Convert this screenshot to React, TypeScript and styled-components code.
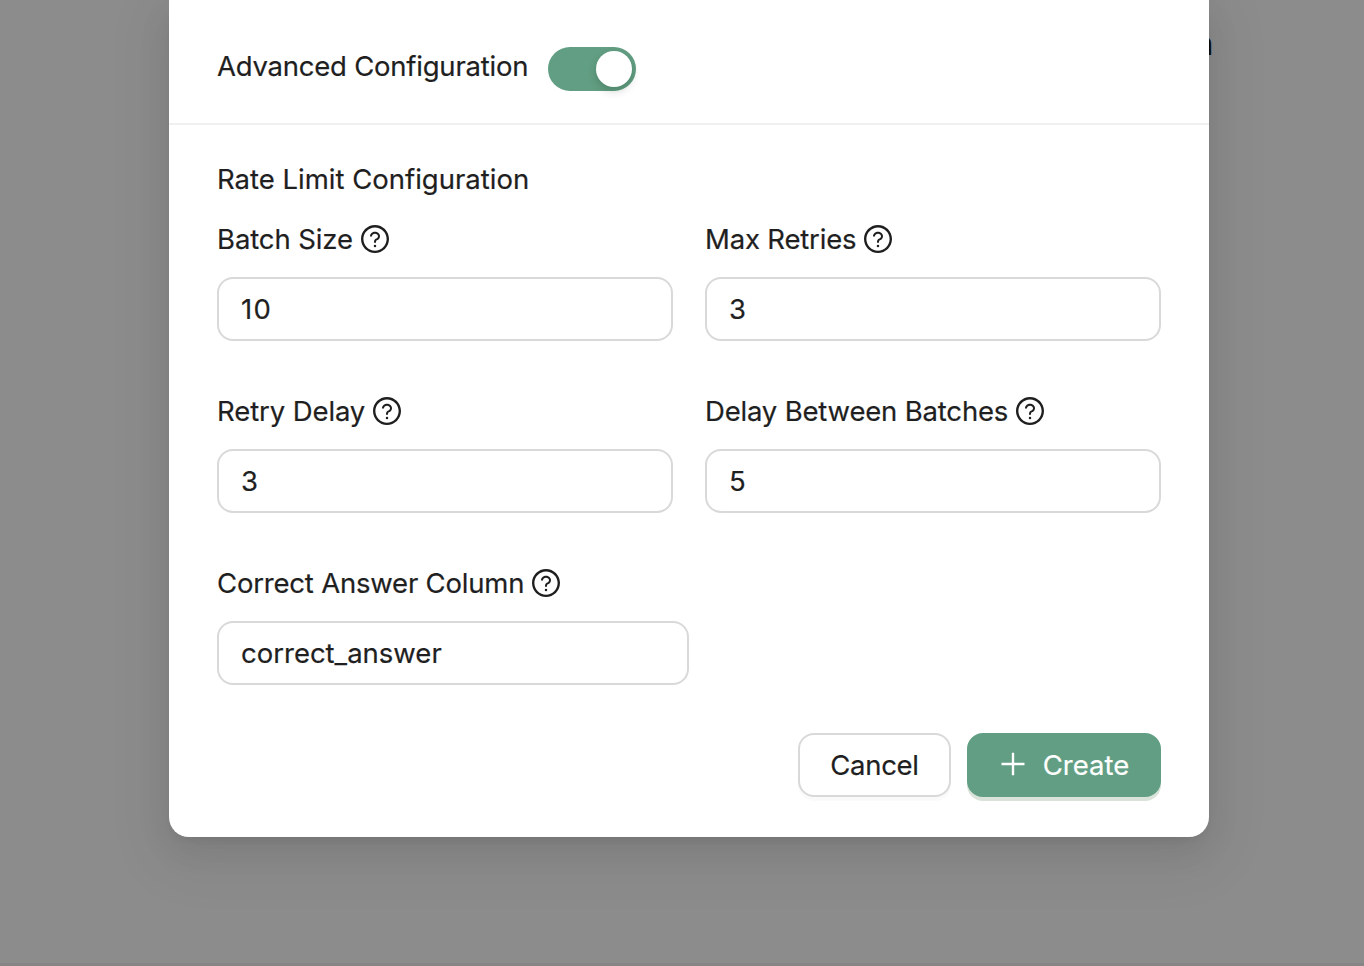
import React from "react";
import styled, { createGlobalStyle } from "styled-components";

const GlobalStyle = createGlobalStyle`
  * { box-sizing: border-box; }
  body {
    margin: 0;
    background: #8c8c8c;
    overflow: hidden;
  }
`;

const Page = styled.div`
  position: relative;
  width: 1364px;
  height: 966px;
  padding-left: 169px;
  overflow: hidden;
  background: #8c8c8c;
  border-bottom: 3px solid #868485;
  color: #1f1f1f;
  font-family: Inter, "Liberation Sans", sans-serif;
  font-size: 27.5px;
  line-height: 44px;
  -webkit-text-stroke: 0.2px currentColor;
`;

const PageHeading = styled.div`
  position: absolute;
  top: 22px;
  right: 151px;
  color: #0c0c0c;
  font-size: 32px;
  font-weight: 600;
`;

const Modal = styled.main`
  position: relative;
  width: 1040px;
  height: 837px;
  background: #fff;
  border-radius: 0 0 20px 20px;
  box-shadow:
    0 12px 32px 0 rgba(0, 0, 0, 0.08),
    0 6px 12px -8px rgba(0, 0, 0, 0.12),
    0 18px 56px 16px rgba(0, 0, 0, 0.05);
`;

const ModalHeader = styled.header`
  display: flex;
  align-items: center;
  gap: 20px;
  height: 125px;
  padding: 12px 48px 0;
  border-bottom: 2px solid #f0f0f0;
`;

const Text = styled.span<{ $tracking?: number }>`
  display: block;
  white-space: nowrap;
  letter-spacing: ${(p) => p.$tracking ?? 0}px;
`;

const HeaderTitle = styled(Text)`
  width: 311px;
  padding-bottom: 3px;
`;

const Switch = styled.button`
  display: flex;
  justify-content: flex-end;
  width: 88px;
  height: 44px;
  margin-top: 2px;
  padding: 4px;
  border: 0;
  border-radius: 22px;
  background: #629e83;
`;

const SwitchHandle = styled.span`
  width: 36px;
  height: 36px;
  border-radius: 50%;
  background: #fff;
  box-shadow: 0 4px 8px rgba(0, 35, 11, 0.2);
`;

const Form = styled.form`
  padding: 32px 48px 0;
`;

const FieldGrid = styled.div`
  display: grid;
  grid-template-columns: 456px 456px;
  column-gap: 32px;
`;

const Field = styled.div<{ $width?: number }>`
  width: ${(p) => p.$width ?? 456}px;
  height: 172px;
  padding-top: 16px;
`;

const Label = styled.label`
  display: flex;
  align-items: center;
  gap: 8px;
  height: 44px;
  margin-bottom: 16px;
`;

const Input = styled.input<{ $tracking?: number }>`
  display: block;
  width: 100%;
  height: 64px;
  padding: 0 22px;
  border: 2px solid #d9d9d9;
  border-radius: 16px;
  outline: 0;
  background: #fff;
  color: inherit;
  font: inherit;
  letter-spacing: ${(p) => p.$tracking ?? 0}px;
`;

const Footer = styled.footer`
  display: flex;
  justify-content: flex-end;
  gap: 16px;
  margin-top: 16px;
`;

const Button = styled.button<{ $primary?: boolean }>`
  display: flex;
  align-items: center;
  justify-content: center;
  gap: 16px;
  width: ${(p) => (p.$primary ? 194 : 153)}px;
  height: 64px;
  padding: 0;
  border: 2px solid ${(p) => (p.$primary ? "#629e83" : "#d9d9d9")};
  border-radius: 16px;
  background: ${(p) => (p.$primary ? "#629e83" : "#fff")};
  box-shadow: 0 4px 0 ${(p) => (p.$primary ? "#d9e3da" : "rgba(0, 0, 0, 0.02)")};
  color: ${(p) => (p.$primary ? "#fff" : "inherit")};
  font: inherit;
`;

const Icon = styled.svg<{ $lift?: number }>`
  flex: none;
  width: 28px;
  height: 28px;
  margin-bottom: ${(p) => p.$lift ?? 0}px;
  fill: currentColor;
`;

const HelpIcon = () => (
  <Icon viewBox="64 64 896 896" aria-hidden="true">
    <path d="M512 64C264.6 64 64 264.6 64 512s200.6 448 448 448 448-200.6 448-448S759.4 64 512 64zm0 820c-205.4 0-372-166.6-372-372s166.6-372 372-372 372 166.6 372 372-166.6 372-372 372z" />
    <path d="M623.6 316.7C593.6 290.4 554 276 512 276s-81.6 14.5-111.6 40.7C369.2 344 352 380.7 352 420v7.6c0 4.4 3.6 8 8 8h48c4.4 0 8-3.6 8-8V420c0-44.1 43.1-80 96-80s96 35.9 96 80c0 31.1-22 59.6-56.1 72.7-21.2 8.1-39.2 22.3-52.1 40.9-13.1 19-19.9 41.8-19.9 64.9V620c0 4.4 3.6 8 8 8h48c4.4 0 8-3.6 8-8v-22.7a48.3 48.3 0 0 1 30.9-44.8c59-22.7 97.1-74.7 97.1-132.5.1-39.3-17.1-76-48.3-103.3zM472 732a40 40 0 1 0 80 0 40 40 0 1 0-80 0z" />
  </Icon>
);

const PlusIcon = () => (
  <Icon viewBox="64 64 896 896" $lift={2} aria-hidden="true">
    <path d="M482 152h60q8 0 8 8v704q0 8-8 8h-60q-8 0-8-8V160q0-8 8-8z" />
    <path d="M152 474h720q8 0 8 8v60q0 8-8 8H152q-8 0-8-8v-60q0-8 8-8z" />
  </Icon>
);

const fields = [
  { label: "Batch Size", value: "10", tracking: -0.1, valueTracking: 1.2 },
  { label: "Max Retries", value: "3", tracking: -0.18 },
  { label: "Retry Delay", value: "3", tracking: -0.1 },
  { label: "Delay Between Batches", value: "5", tracking: -0.18 },
  { label: "Correct Answer Column", value: "correct_answer", tracking: -0.2, width: 472 },
];

export default function App() {
  return (
    <>
      <GlobalStyle />
      <Page>
        <PageHeading>n</PageHeading>
        <Modal>
          <ModalHeader>
            <HeaderTitle $tracking={-0.23}>Advanced Configuration</HeaderTitle>
            <Switch type="button" role="switch" aria-checked="true">
              <SwitchHandle />
            </Switch>
          </ModalHeader>
          <Form>
            <Text>Rate Limit Configuration</Text>
            <FieldGrid>
              {fields.map((f) => (
                <Field key={f.label} $width={f.width}>
                  <Label>
                    <Text $tracking={f.tracking}>{f.label}</Text>
                    <HelpIcon />
                  </Label>
                  <Input defaultValue={f.value} $tracking={f.valueTracking} />
                </Field>
              ))}
            </FieldGrid>
            <Footer>
              <Button type="button">
                <Text $tracking={-0.3}>Cancel</Text>
              </Button>
              <Button type="button" $primary>
                <PlusIcon />
                Create
              </Button>
            </Footer>
          </Form>
        </Modal>
      </Page>
    </>
  );
}
